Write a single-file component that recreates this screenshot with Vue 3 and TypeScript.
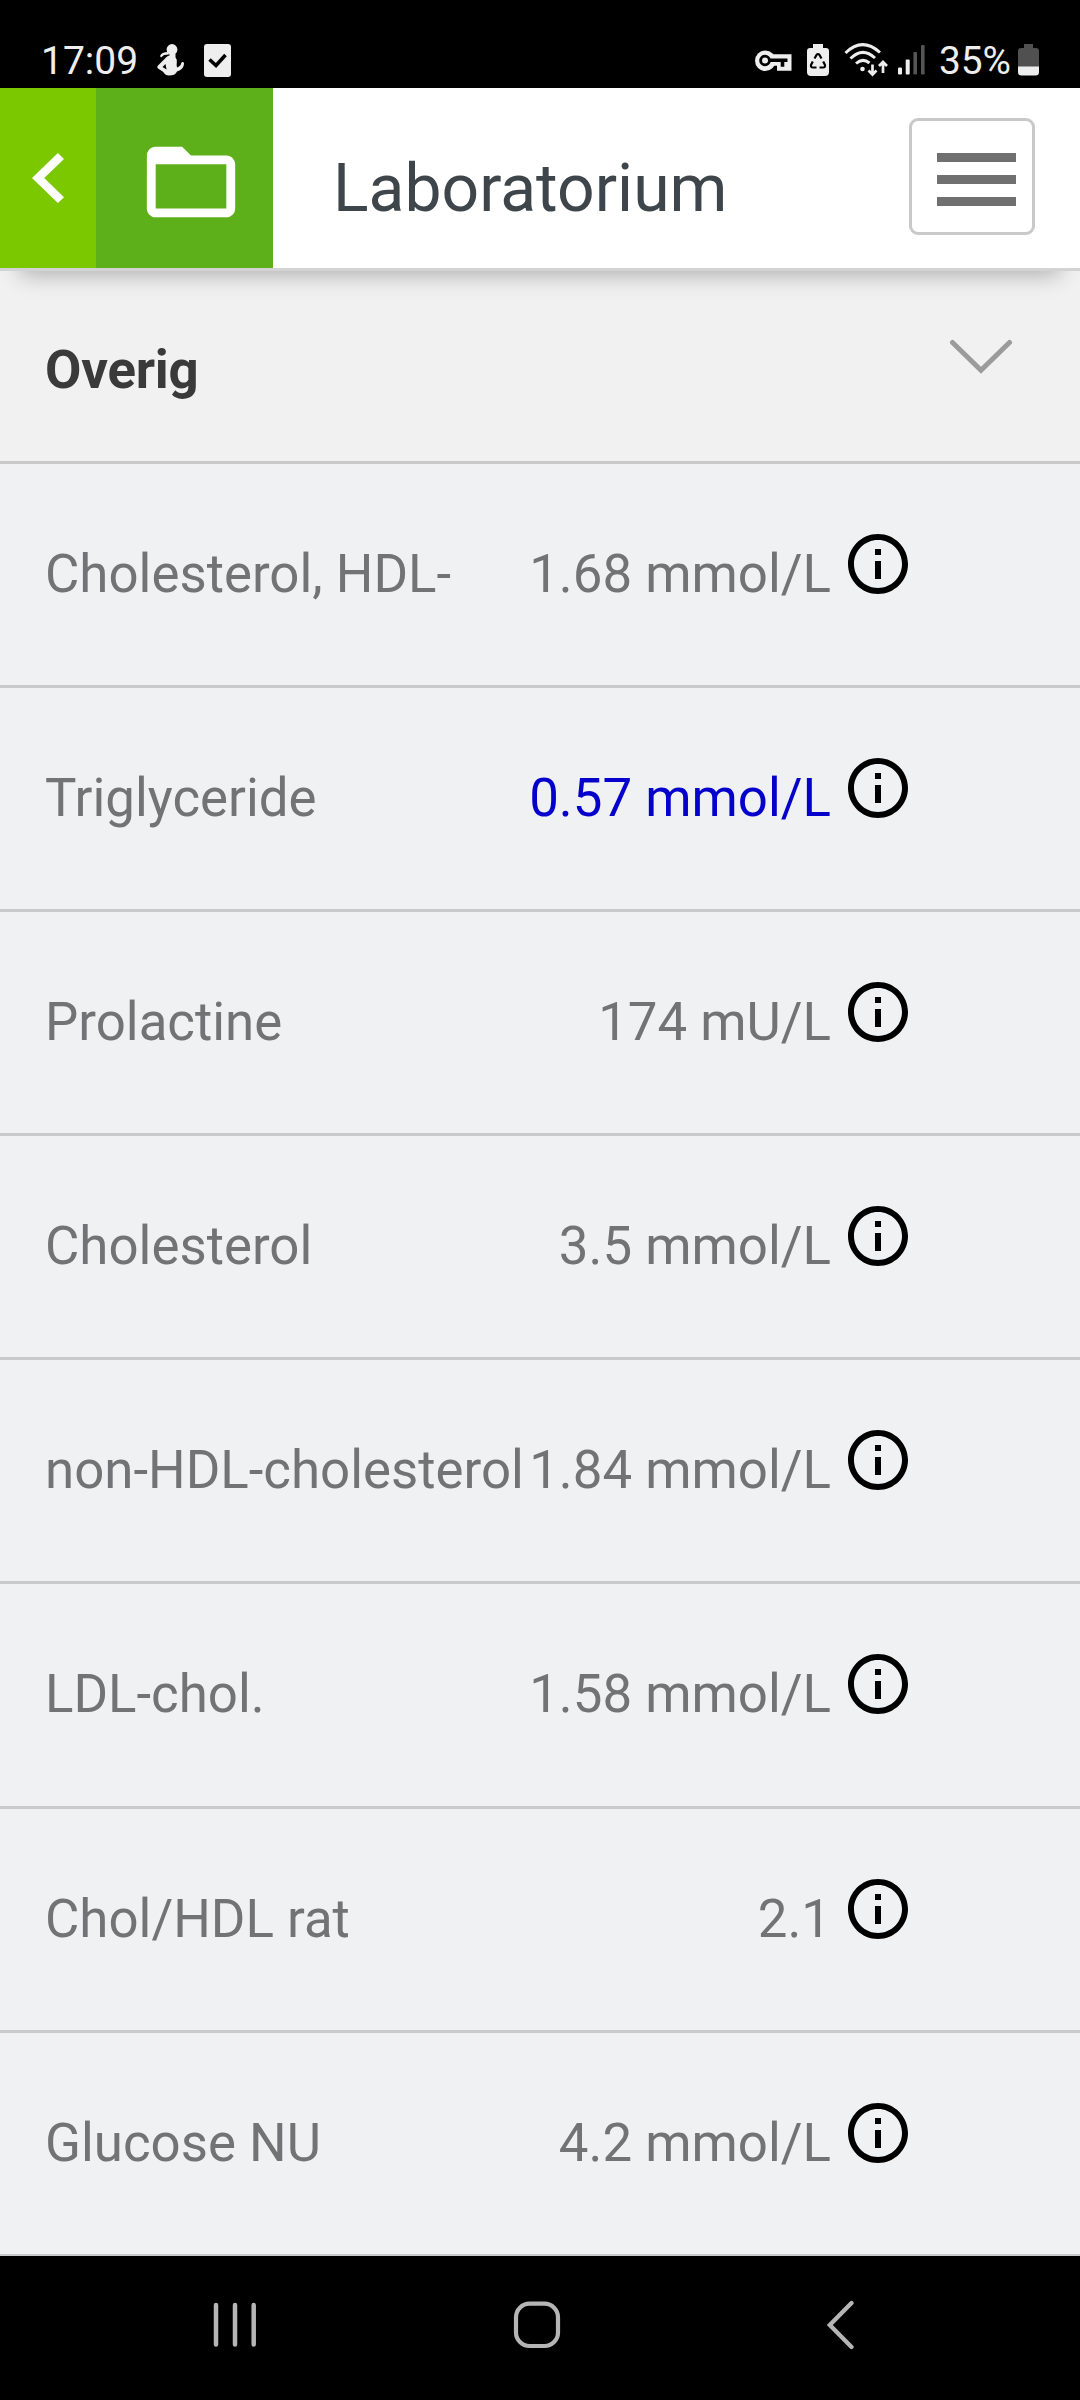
<script setup lang="ts">
interface Result {
  name: string
  value: string
  low?: boolean
}

const results: Result[] = [
  { name: 'Cholesterol, HDL-', value: '1.68 mmol/L' },
  { name: 'Triglyceride', value: '0.57 mmol/L', low: true },
  { name: 'Prolactine', value: '174 mU/L' },
  { name: 'Cholesterol', value: '3.5 mmol/L' },
  { name: 'non-HDL-cholesterol', value: '1.84 mmol/L' },
  { name: 'LDL-chol.', value: '1.58 mmol/L' },
  { name: 'Chol/HDL rat', value: '2.1' },
  { name: 'Glucose NU', value: '4.2 mmol/L' },
]
</script>

<template>
  <div class="screen">
    <div class="status">
      <div class="status-left">
        <span class="clock">17:09</span>
        <svg class="baby" width="28" height="32" viewBox="0 0 28 32" fill="#eee">
          <circle cx="15" cy="5.500" r="5.400" />
          <path d="M12.500 9.500h6v4h-6z" />
          <path d="M9.500 13C13 10.500 18 11.500 19.500 15c1 3-.5 5 .5 8.500 2.500-.8 4-2.500 4.300-4.500.4-1.500 3-1 2.700.8-.5 4.700-3.500 6.700-7 7.700-1.500 3-4 4-8 4-3 0-4.500-1.500-6-3.700L1 24.500c-1-1-.8-2 0-3z" />
          <path d="M3 12c1-2.800 3.600-4 8-4l1 2.500-5 .5-3 2.500z" />
          <path d="M5.500 23l3-3 1 5.500z" fill="#000" />
        </svg>
        <svg class="task" width="27" height="33" viewBox="0 0 27 33">
          <rect width="27" height="33" rx="3" fill="#eee" />
          <path d="M5.500 15.500l6.500 6L21.500 11" fill="none" stroke="#000" stroke-width="3.600" />
        </svg>
      </div>
      <div class="status-right">
        <svg class="key" width="37" height="22" viewBox="0 0 37 22">
          <circle cx="10.300" cy="10.700" r="10.300" fill="#eee" />
          <path d="M12 4.200h24.500v16.600H22v-5H12z" fill="#eee" />
          <path d="M15 10.300h17.500M27.500 10.300v6.500" fill="none" stroke="#000" stroke-width="3.600" />
          <circle cx="10" cy="10.500" r="4.400" fill="none" stroke="#000" stroke-width="2.800" />
        </svg>
        <svg class="saver" width="22" height="32" viewBox="0 0 22 32">
          <path d="M6 0h10v4h3a3 3 0 0 1 3 3v21a4 4 0 0 1-4 4H4a4 4 0 0 1-4-4V7a3 3 0 0 1 3-3h3z" fill="#eee" />
          <g fill="none" stroke="#000" stroke-width="2.200" stroke-linejoin="round">
            <path d="M7.500 14.500l2-3.500q1.500-2 3 0l2 3.500" />
            <path d="M5.800 17.500l-1.800 3.500q-.5 2.500 2 2.500h3.500" />
            <path d="M16.200 17.500l1.800 3.500q.5 2.500-2 2.500h-3.500" />
          </g>
        </svg>
        <svg class="wifi" width="45" height="34" viewBox="0 0 45 34" fill="none" stroke="#eee">
          <path d="M1.500 10Q18 -6.500 36 9.500" stroke-width="3" />
          <path d="M6.500 15.500Q18.500 3.500 31 15" stroke-width="3" />
          <path d="M12 20.500Q18.500 14.500 25.500 20" stroke-width="3" />
          <circle cx="18.500" cy="26" r="2.300" fill="#eee" stroke="none" />
          <path d="M28.500 21.500V31M24.500 27.500l4 4 4-4M39 30V19.500M35 23l4-4 4 4" stroke-width="2.700" />
        </svg>
        <svg class="signal" width="28" height="30" viewBox="0 0 28 30">
          <rect x="0" y="22.500" width="4" height="7" rx="1" fill="#eee" />
          <rect x="7.700" y="14.500" width="4" height="15" rx="1" fill="#eee" />
          <rect x="15.400" y="7" width="3.600" height="22.500" rx="1" fill="#555" />
          <rect x="23" y="0" width="3.600" height="29.500" rx="1" fill="#555" />
        </svg>
        <span class="percent">35%</span>
        <svg class="battery" width="22" height="32" viewBox="0 0 22 32">
          <path d="M6 0h9v4h3a3 3 0 0 1 3 3v16H0V7a3 3 0 0 1 3-3h3z" fill="#505050" />
          <path d="M0 22.500h21V28a3.500 3.500 0 0 1-3.500 3.500h-14A3.500 3.500 0 0 1 0 28z" fill="#eee" />
        </svg>
      </div>
    </div>

    <header class="header">
      <div class="back">
        <svg width="32" height="50" viewBox="8 6 7.410 12" preserveAspectRatio="none" fill="#fff">
          <path d="M15.410 7.410L14 6l-6 6 6 6 1.410-1.410L10.830 12z" />
        </svg>
      </div>
      <div class="folder">
        <svg width="106" height="106" viewBox="0 0 24 24" fill="#fff">
          <path d="M20 6h-8l-2-2H4c-1.100 0-1.990.9-1.990 2L2 18c0 1.100.9 2 2 2h16c1.100 0 2-.9 2-2V8c0-1.100-.9-2-2-2zm0 12H4V8h16v10z" />
        </svg>
      </div>
      <h1 class="title">Laboratorium</h1>
      <button class="menu" type="button" aria-label="Menu">
        <span class="bar"></span>
        <span class="bar"></span>
        <span class="bar"></span>
      </button>
    </header>

    <main class="content">
      <div class="group">
        <h2 class="group-name">Overig</h2>
        <svg class="chevron" width="64" height="36" viewBox="0 0 64 36" fill="none" stroke="#9b9b9b" stroke-width="5" stroke-linecap="round">
          <path d="M3.500 3.500L32 31.300 60.500 3.500" />
        </svg>
      </div>
      <div v-for="r in results" :key="r.name" class="row">
        <span class="name">{{ r.name }}</span>
        <span class="value" :class="{ low: r.low }">{{ r.value }}</span>
        <svg class="info" width="72" height="72" viewBox="0 0 24 24">
          <path d="M11 7h2v2h-2zm0 4h2v6h-2zm1-9C6.480 2 2 6.480 2 12s4.480 10 10 10 10-4.480 10-10S17.520 2 12 2zm0 18c-4.410 0-8-3.590-8-8s3.590-8 8-8 8 3.590 8 8-3.590 8-8 8z" />
        </svg>
      </div>
    </main>

    <nav class="nav">
      <svg class="recents" width="44" height="48" viewBox="0 0 44 48" stroke="#b5b5b5" stroke-width="4.500" stroke-linecap="round">
        <path d="M3 4v39.500M22 4v39.500M40.700 4v39.500" />
      </svg>
      <svg class="home" width="48" height="48" viewBox="0 0 48 48" fill="none" stroke="#b5b5b5" stroke-width="4.200">
        <rect x="3" y="2.700" width="42" height="42.300" rx="13.500" />
      </svg>
      <svg class="nav-back" width="28" height="50" viewBox="0 0 28 50" fill="none" stroke="#b5b5b5" stroke-width="4.300" stroke-linecap="round">
        <path d="M24.500 3L2.800 25l21.700 22" />
      </svg>
    </nav>
  </div>
</template>

<style>
body {
  margin: 0;
  background: #000;
}
</style>

<style scoped>
.screen {
  width: 1080px;
  height: 2400px;
  overflow: hidden;
  display: flex;
  flex-direction: column;
  background: #f0f1f3;
  font-family: Roboto, sans-serif;
}
svg {
  display: block;
  flex: none;
}
.status {
  flex: none;
  box-sizing: border-box;
  height: 88px;
  padding: 44px 41px 0 41px;
  display: flex;
  justify-content: space-between;
  background: #000;
  color: #eee;
  font-size: 38.800px;
  line-height: 34px;
}
.status-left,
.status-right {
  display: flex;
  align-items: flex-start;
}
.clock {
  width: 116px;
  font-size: 39px;
}
.task {
  margin-left: 19px;
}
.key {
  margin-top: 6px;
}
.saver {
  margin-left: 15px;
}
.wifi {
  margin: -1px 0 0 15px;
}
.signal {
  margin: 1px 0 0 9px;
}
.percent {
  margin-left: 13px;
  width: 79px;
}
.battery {
  margin-right: -1px;
}
.header {
  position: relative;
  z-index: 1;
  flex: none;
  box-sizing: border-box;
  height: 183px;
  display: flex;
  background: #fff;
  border-bottom: 3px solid #d3d3d3;
  box-shadow: 0 24px 21px -20px rgba(0, 0, 0, 0.28);
}
.back {
  width: 96px;
  display: flex;
  align-items: center;
  justify-content: center;
  background: #7cc800;
}
.folder {
  width: 177px;
  box-sizing: border-box;
  padding: 41px 0 0 42px;
  background: #5eb01b;
}
.title {
  margin: 0;
  flex: 1;
  padding: 61px 0 0 60px;
  font-size: 66px;
  line-height: 80px;
  font-weight: 400;
  color: #3e464c;
}
.menu {
  box-sizing: border-box;
  width: 126px;
  height: 117px;
  margin: 30px 45px 0 0;
  padding: 32px 0 0 25px;
  display: flex;
  flex-direction: column;
  gap: 13px;
  background: #fff;
  border: 3px solid #c9c9c9;
  border-radius: 9px;
}
.bar {
  width: 79px;
  height: 9px;
  background: #707070;
}
.content {
  flex: none;
  height: 1985px;
  overflow: hidden;
}
.group {
  box-sizing: border-box;
  height: 193px;
  padding: 0 67px 0 45px;
  display: flex;
  justify-content: space-between;
  background: #f1f1f1;
  border-bottom: 3px solid #c9c9c9;
}
.group-name {
  margin: 0;
  padding-top: 68px;
  font-size: 52.800px;
  line-height: 62px;
  font-weight: 700;
  letter-spacing: -0.200px;
  color: #3a3a3a;
}
.chevron {
  margin-top: 68px;
}
.row {
  box-sizing: border-box;
  height: 224.100px;
  padding: 64px 166.500px 0 45px;
  display: flex;
  align-items: flex-start;
  font-size: 52.800px;
  line-height: 62px;
  color: #727374;
  white-space: nowrap;
  border-bottom: 3px solid #c9cacc;
}
.name {
  margin-top: 15px;
}
.value {
  margin: 15px 10.500px 0 auto;
}
.low {
  color: #0500cc;
}
.nav {
  flex: none;
  height: 144px;
  display: flex;
  background: #000;
}
.recents {
  margin: 45px 0 0 213px;
}
.home {
  margin: 45px 0 0 256px;
}
.nav-back {
  margin: 44px 0 0 265.500px;
}
</style>
